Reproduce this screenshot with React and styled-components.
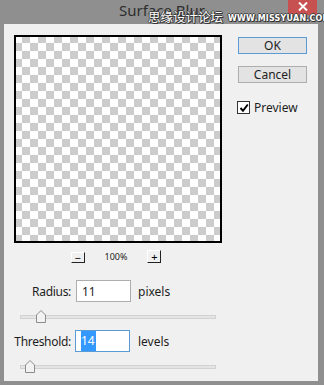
import React from 'react'
import styled, { createGlobalStyle } from 'styled-components'

const GlobalStyle = createGlobalStyle`
    html, body {
        margin: 0;
        padding: 0;
        background: #8f8f8f;
    }
    * {
        box-sizing: border-box;
    }
`

const Window = styled.div`
    position: relative;
    width: 324px;
    height: 385px;
    display: flex;
    flex-direction: column;
    background: #8f8f8f;
    font-family: 'Noto Sans', 'Open Sans', sans-serif;
    font-size: 12px;
    color: #1e1e1e;
    overflow: hidden;
`
const TitleBar = styled.header`
    position: relative;
    height: 24px;
    display: flex;
    align-items: center;
    justify-content: center;
    font-size: 15px;
    color: #2e2e2e;
    padding-bottom: 5px;
`
const CloseButton = styled.span`
    position: absolute;
    top: 0;
    right: 7px;
    width: 29px;
    height: 15px;
    background: #c75050;
    display: flex;
    align-items: center;
    justify-content: center;
    padding-bottom: 2px;
`
const Watermark = styled.div`
    position: absolute;
    z-index: 1;
    left: 148px;
    top: 9px;
    display: flex;
    align-items: center;
    gap: 5px;
    white-space: nowrap;
    color: #fff;
    pointer-events: none;
    text-shadow: 1px 1px 0 #333, -1px 0 0 #444, 0 -1px 0 #444, 1px 0 0 #444, 0 1px 0 #444;
`
const WatermarkCn = styled.span`
    font-family: 'Noto Sans CJK SC', sans-serif;
    font-size: 12.5px;
    line-height: 16px;
`
const WatermarkUrl = styled.span`
    font-family: 'DejaVu Sans', sans-serif;
    font-size: 8px;
    font-weight: bold;
    letter-spacing: 0.2px;
    margin-top: 3px;
`

const Client = styled.main`
    flex: 1;
    margin: 0 6px 4px 4px;
    background: #f0f0f0;
    padding: 11px 0 0 10px;
    display: flex;
    flex-direction: column;
`
const TopRow = styled.div`
    display: flex;
    gap: 16px;
`
const PreviewColumn = styled.div`
    width: 208px;
    display: flex;
    flex-direction: column;
`
const Canvas = styled.div`
    width: 208px;
    height: 208px;
    border: 2px solid #000;
    background-color: #fff;
    background-image: repeating-conic-gradient(#cccccc 0 25%, #ffffff 0 50%);
    background-size: 16px 16px;
    background-position: -2px -2px;
`
const ZoomBar = styled.div`
    height: 14px;
    margin-top: 6px;
    display: flex;
    align-items: center;
    justify-content: center;
    gap: 20px;
    font-size: 9px;
    padding-right: 4px;
`
const ZoomButton = styled.span`
    width: 14px;
    height: ${p => (p.$tall ? 13 : 11)}px;
    margin-top: ${p => (p.$tall ? 0 : 2)}px;
    display: flex;
    align-items: center;
    justify-content: center;
    border-right: 1px solid #222;
    border-bottom: 1px solid #222;
    border-top: 1px solid #fff;
    border-left: 1px solid #fff;
    font-size: 11px;
    line-height: 1;
    color: #000;
`

const SideColumn = styled.div`
    width: 69px;
    padding-top: 2px;
    display: flex;
    flex-direction: column;
`
const DialogButton = styled.button`
    height: 17px;
    width: 69px;
    margin-bottom: 12px;
    padding: 0;
    font-family: inherit;
    font-size: 12px;
    line-height: 14px;
    color: #1e1e1e;
    background: #e3e3e3;
    border: 1px solid ${p => (p.$primary ? '#5b9bd5' : '#adadad')};
    outline: none;
`
const PreviewToggle = styled.label`
    margin-top: 4px;
    display: flex;
    align-items: center;
    gap: 4px;
    font-size: 12px;
    margin-left: -1px;
`
const CheckBox = styled.span`
    width: 13px;
    height: 13px;
    background: #fff;
    border: 1px solid #333;
    display: flex;
    align-items: center;
    justify-content: center;
`

const Params = styled.section`
    margin-top: 17px;
    display: flex;
    flex-direction: column;
`
const ParamRow = styled.div`
    display: flex;
    align-items: center;
    height: 22px;
`
const ParamLabel = styled.span`
    width: 57px;
    flex-shrink: 0;
    display: flex;
    justify-content: flex-end;
    white-space: nowrap;
    margin-right: 5px;
    font-size: 12px;
    letter-spacing: -0.3px;
`
const ParamInput = styled.div`
    width: 55px;
    height: 22px;
    margin-left: ${p => (p.$focused ? -1 : 0)}px;
    background: #fff;
    border: 1px solid ${p => (p.$focused ? '#5b9bd5' : '#adadad')};
    padding-left: 5px;
    display: flex;
    align-items: center;
    font-size: 12px;
`
const Selected = styled.span`
    background: #3399ff;
    color: #fff;
    padding: 1px 1px 2px 0;
`
const ParamUnit = styled.span`
    margin-left: ${p => (p.$focused ? 8 : 7)}px;
    font-size: 12px;
`
const Slider = styled.div`
    position: relative;
    width: 196px;
    height: 13px;
    margin: 8px 0 7px 6px;
`
const Track = styled.div`
    position: absolute;
    left: 0;
    right: 0;
    top: 5px;
    height: 4px;
    background: #e4e4e4;
    border: 1px solid #d2d2d2;
`
const Thumb = styled.svg`
    position: absolute;
    top: 0;
    width: 10px;
    height: 13px;
`

function SliderControl({ offset }) {
    return (
        <Slider>
            <Track />
            <Thumb style={{ left: offset }} viewBox="0 0 10 13">
                <path d="M0.5 5 L5 0.5 L9.5 5 V12.5 H0.5 Z" fill="#f2f2f2" stroke="#8c8c8c" />
            </Thumb>
        </Slider>
    )
}

export default function App() {
    return (
        <>
            <GlobalStyle />
            <Window>
                <TitleBar>
                    Surface Blur
                    <CloseButton>
                        <svg width="10" height="9" viewBox="0 0 10 9">
                            <path d="M1 0.5 L9 8.5 M9 0.5 L1 8.5" stroke="#fff" strokeWidth="2" />
                        </svg>
                    </CloseButton>
                    <Watermark>
                        <WatermarkCn>思缘设计论坛</WatermarkCn>
                        <WatermarkUrl>WWW.MISSYUAN.COM</WatermarkUrl>
                    </Watermark>
                </TitleBar>
                <Client>
                    <TopRow>
                        <PreviewColumn>
                            <Canvas />
                            <ZoomBar>
                                <ZoomButton>−</ZoomButton>
                                <span>100%</span>
                                <ZoomButton $tall>+</ZoomButton>
                            </ZoomBar>
                        </PreviewColumn>
                        <SideColumn>
                            <DialogButton $primary>OK</DialogButton>
                            <DialogButton>Cancel</DialogButton>
                            <PreviewToggle>
                                <CheckBox>
                                    <svg width="10" height="10" viewBox="0 0 10 10">
                                        <path d="M1.5 5 L4 7.8 L8.8 1.5" fill="none" stroke="#000" strokeWidth="2" />
                                    </svg>
                                </CheckBox>
                                Preview
                            </PreviewToggle>
                        </SideColumn>
                    </TopRow>
                    <Params>
                        <ParamRow>
                            <ParamLabel>Radius:</ParamLabel>
                            <ParamInput>11</ParamInput>
                            <ParamUnit>pixels</ParamUnit>
                        </ParamRow>
                        <SliderControl offset={16} />
                        <ParamRow>
                            <ParamLabel>Threshold:</ParamLabel>
                            <ParamInput $focused>
                                <Selected>14</Selected>
                            </ParamInput>
                            <ParamUnit $focused>levels</ParamUnit>
                        </ParamRow>
                        <SliderControl offset={5} />
                    </Params>
                </Client>
            </Window>
        </>
    )
}
